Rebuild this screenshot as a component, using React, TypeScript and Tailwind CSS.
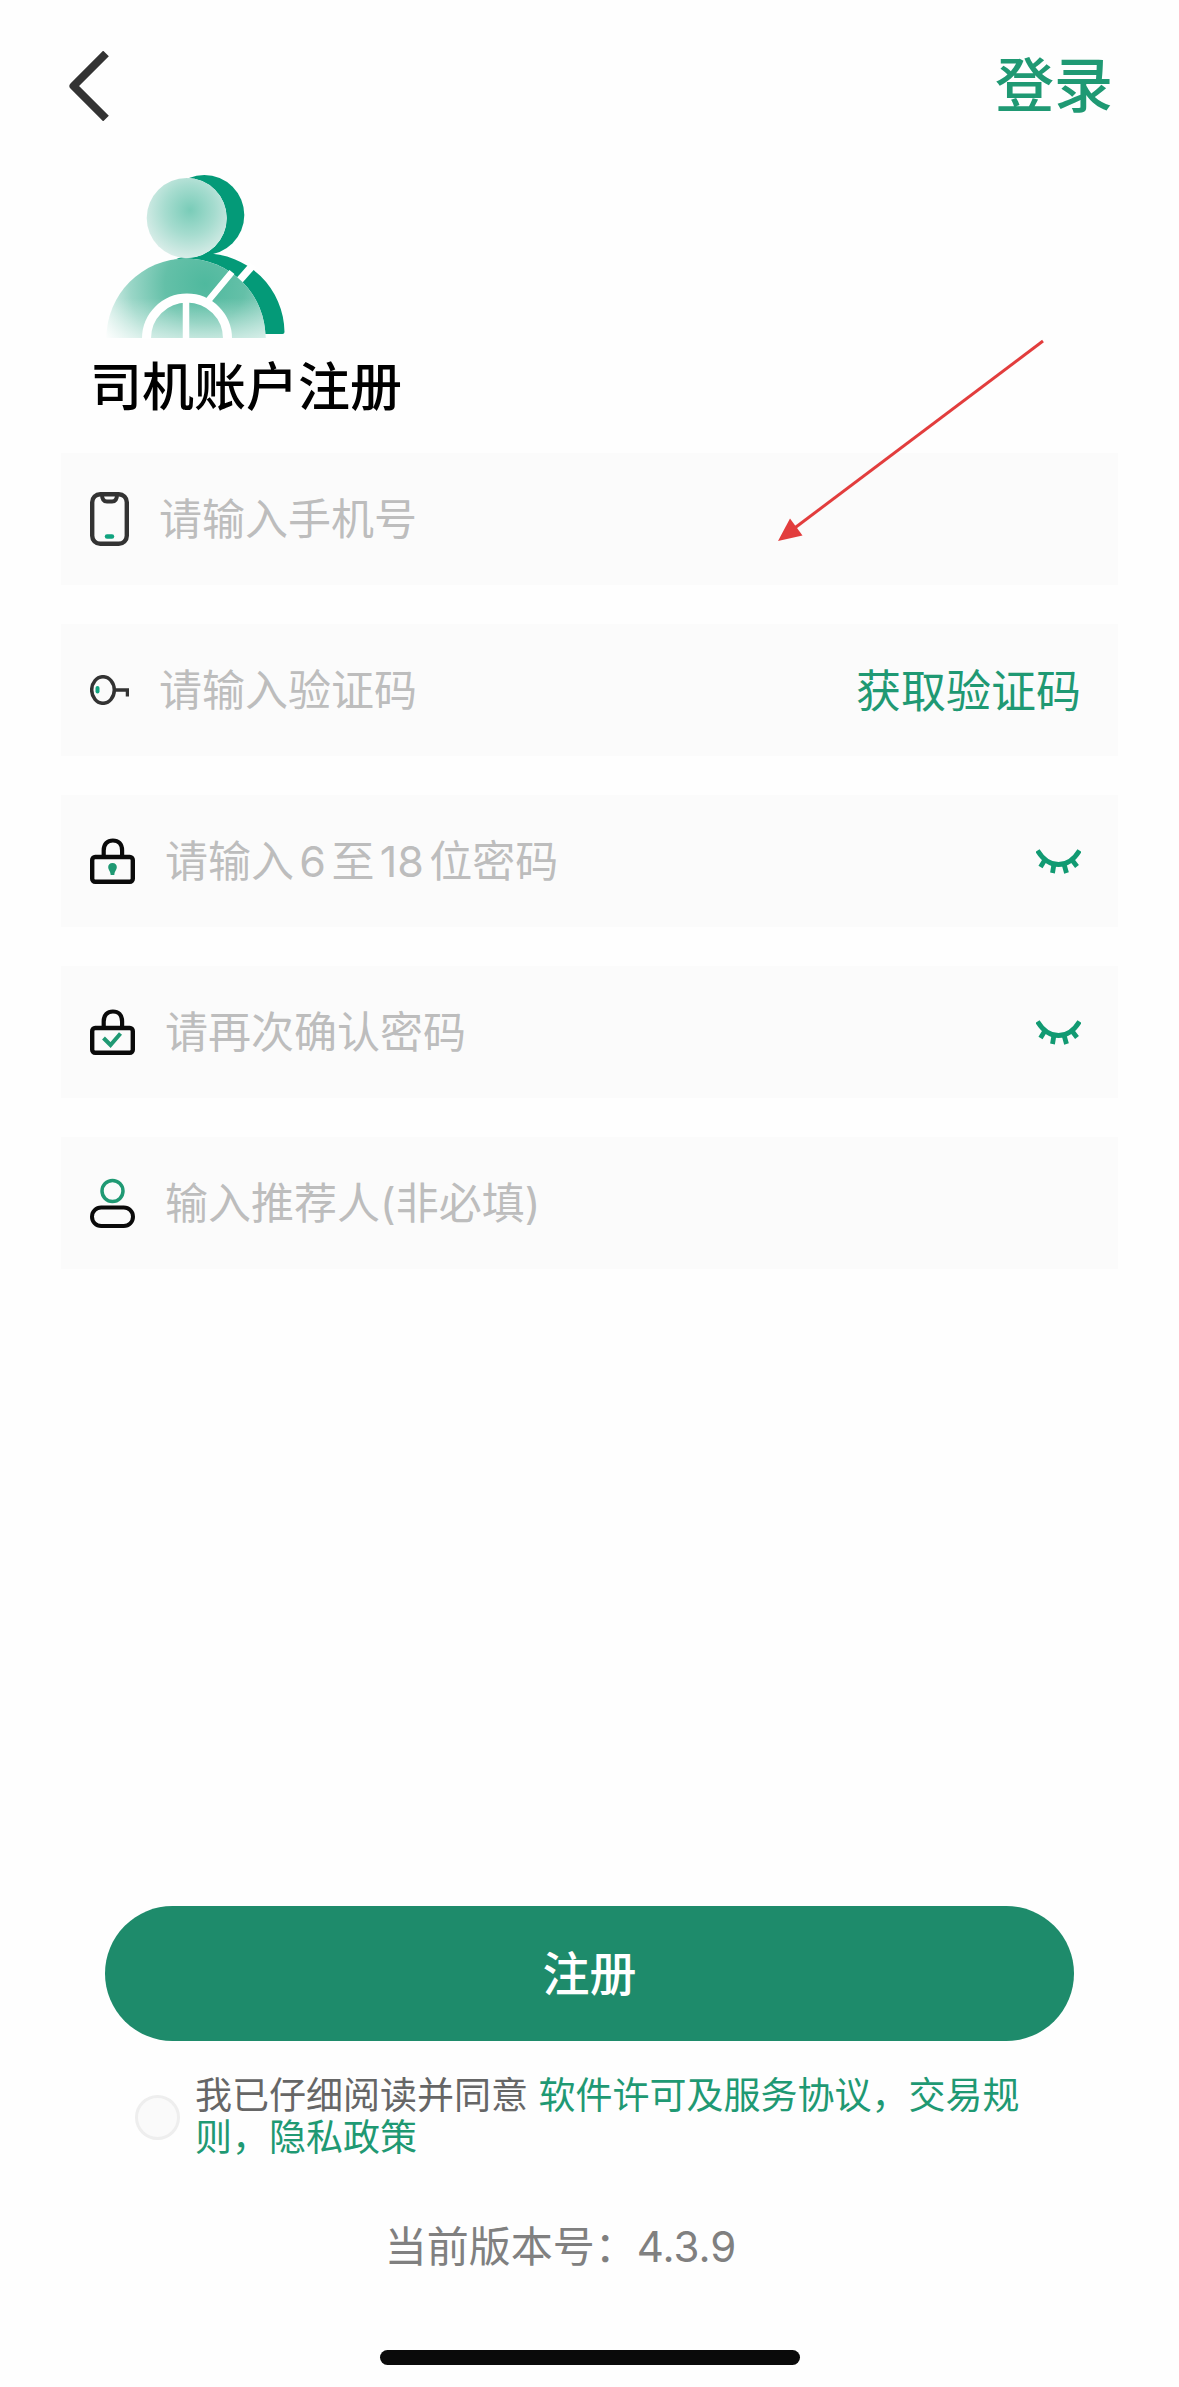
import { useState, type ReactNode } from 'react'

const GREEN = '#1f9973'

function PhoneIcon() {
  return (
    <svg width="39" height="54" viewBox="0 0 39 54" fill="none" aria-hidden="true">
      <rect x="2.200" y="2.200" width="34.600" height="49.600" rx="8" stroke="#333" strokeWidth="4.400" />
      <path d="M12 2.500c0 5 2 7 5 7h5c3 0 5-2 5-7" stroke="#333" strokeWidth="4" />
      <path d="M17 44.500h5" stroke="#10a37f" strokeWidth="4.500" strokeLinecap="round" />
    </svg>
  )
}

function KeyIcon() {
  return (
    <svg width="39" height="30" viewBox="0 0 39 30" fill="none" aria-hidden="true">
      <ellipse cx="13" cy="15" rx="11.300" ry="13.300" stroke="#333" strokeWidth="3.500" />
      <path d="M24.500 15h13v6.500" stroke="#333" strokeWidth="3.500" />
      <path d="M7.500 13v3.500" stroke="#10a37f" strokeWidth="4" strokeLinecap="round" />
    </svg>
  )
}

function LockIcon({ checked = false }: { checked?: boolean }) {
  return (
    <svg width="45" height="46" viewBox="0 0 45 46" fill="none" aria-hidden="true">
      <path d="M13.700 19v-6.500C13.700 6 17.500 2.500 22.900 2.500s9.200 3.500 9.200 10V19" stroke="#0a0a0a" strokeWidth="4.200" />
      <rect x="2.200" y="19" width="40.600" height="24.800" rx="3" stroke="#0a0a0a" strokeWidth="4.400" />
      {checked ? (
        <path d="M13.500 29l7 7 10-11.500" stroke={GREEN} strokeWidth="4" />
      ) : (
        <path d="M22.500 25c2.800 0 4.300 1.800 4.300 4 0 3-2.300 4-2.500 8h-3.600c-.2-4-2.500-5-2.500-8 0-2.200 1.500-4 4.300-4z" fill={GREEN} />
      )}
    </svg>
  )
}

function PersonIcon() {
  return (
    <svg width="45" height="50" viewBox="0 0 45 50" fill="none" aria-hidden="true">
      <circle cx="22.500" cy="13" r="10.500" stroke={GREEN} strokeWidth="3.500" />
      <rect x="2" y="29.500" width="41" height="18.500" rx="9.200" stroke="#0a0a0a" strokeWidth="4" />
    </svg>
  )
}

function ClosedEyeIcon() {
  return (
    <svg width="45" height="25" viewBox="0 0 45 25" fill="none" stroke="#119a72" strokeWidth="4.800" aria-hidden="true">
      <path d="M1.500 1.500C7 10.500 14 15.500 22.500 15.500S38 10.500 43.500 1.500" />
      <path d="M8.500 11.500l-4 6.500M18 15l-1.500 9M28 15l2.500 9M36 11l5 6.500" />
    </svg>
  )
}

function DriverAvatar() {
  return (
    <svg className="block" width="195" height="170" viewBox="90 171 195 170" aria-hidden="true">
      <defs>
        <radialGradient id="head" gradientUnits="userSpaceOnUse" cx="190" cy="210" r="50">
          <stop offset="0" stopColor="#79ccb8" />
          <stop offset="0.500" stopColor="#a6dccf" />
          <stop offset="1" stopColor="#dceeea" />
        </radialGradient>
        <radialGradient id="body" gradientUnits="userSpaceOnUse" cx="205" cy="284" r="115">
          <stop offset="0" stopColor="#4fb99e" />
          <stop offset="0.350" stopColor="#64c0a8" />
          <stop offset="0.650" stopColor="#9ad6c7" />
          <stop offset="1" stopColor="#fff" />
        </radialGradient>
        <linearGradient id="fade" x1="0" y1="0" x2="0" y2="1">
          <stop offset="0.500" stopColor="#fff" stopOpacity="0" />
          <stop offset="1" stopColor="#fff" stopOpacity="0.550" />
        </linearGradient>
      </defs>
      <circle cx="204.300" cy="215" r="40" fill="#049a78" />
      <path d="M125.500 334a79.500 79.500 0 0 1 159-2q0 2-2 2z" fill="#049a78" />
      <path d="M238 282l15-17" stroke="#fff" strokeWidth="7.500" />
      <circle cx="186.700" cy="218" r="40" fill="#fff" />
      <circle cx="186.700" cy="218" r="40" fill="url(#head)" />
      <path d="M106.500 338a79.500 79.500 0 0 1 159 0z" fill="#fff" />
      <path d="M106.500 338a79.500 79.500 0 0 1 159 0z" fill="url(#body)" />
      <path d="M106.500 338a79.500 79.500 0 0 1 159 0z" fill="url(#fade)" />
      <path d="M146.500 338.500a40.500 40.500 0 0 1 81 0" fill="none" stroke="#fff" strokeWidth="9" />
      <path d="M186 300v39M208 301l24-29" stroke="#fff" strokeWidth="6.500" />
    </svg>
  )
}

function PointerArrow() {
  return (
    <svg
      className="pointer-events-none absolute right-[73px] -top-[114px]"
      width="269"
      height="204"
      viewBox="0 0 269 204"
      aria-hidden="true"
    >
      <path d="M267 2L16 191" stroke="#e23d3d" strokeWidth="3" />
      <path d="M2 202l12-22.500 12.500 17z" fill="#e23d3d" />
    </svg>
  )
}

interface FieldProps {
  id: string
  label: string
  placeholder: string
  icon: ReactNode
  type?: string
  children?: ReactNode
}

function Field({ id, label, placeholder, icon, type = 'text', children }: FieldProps) {
  return (
    <div className="relative flex h-[132px] items-center gap-[30px] bg-[#fbfbfb] pl-[29px] pr-[37px]">
      <label htmlFor={id} aria-label={label} className="shrink-0">
        {icon}
      </label>
      <input
        id={id}
        type={type}
        placeholder={placeholder}
        className="h-[60px] min-w-0 flex-1 bg-transparent text-[43px] leading-[60px] text-[#333] outline-none [text-autospace:normal] placeholder:text-[#bdbdbd]"
      />
      {children}
    </div>
  )
}

function PasswordField(props: FieldProps) {
  const [visible, setVisible] = useState(false)

  return (
    <Field {...props} type={visible ? 'text' : 'password'}>
      <button type="button" aria-label="显示密码" onClick={() => setVisible(!visible)}>
        <ClosedEyeIcon />
      </button>
    </Field>
  )
}

export default function App() {
  const [agreed, setAgreed] = useState(false)

  return (
    <div className="flex min-h-screen flex-col bg-[#fefefe] font-[Inter,'Noto_Sans_CJK_SC',sans-serif]">
      <header className="flex h-[171px] items-center justify-between px-[66px]">
        <button type="button" aria-label="返回">
          <svg width="44" height="70" viewBox="0 0 44 70" fill="none" aria-hidden="true">
            <path d="M40 2.500L7.500 35 40 67.500" stroke="#333" strokeWidth="8" strokeLinejoin="round" />
          </svg>
        </button>
        <a href="#login" className="text-[59px] font-medium leading-[72px] text-[#1f9973]">登录</a>
      </header>

      <main className="flex flex-1 flex-col">
        <div className="px-[90px]">
          <DriverAvatar />
          <h1 className="mt-4 text-[52px] font-medium leading-[62px] text-black">司机账户注册</h1>
        </div>

        <form className="flex flex-1 flex-col" onSubmit={(e) => e.preventDefault()}>
          <div className="mx-[61px] mt-[34px] flex flex-col gap-[39px]">
            <div className="relative">
              <Field id="phone" label="手机号" placeholder="请输入手机号" icon={<PhoneIcon />} />
              <PointerArrow />
            </div>
            <Field id="code" label="验证码" placeholder="请输入验证码" icon={<KeyIcon />}>
              <button type="button" className="pt-1 text-[45px] leading-[60px] text-[#1f9973]">获取验证码</button>
            </Field>
            <PasswordField id="password" label="密码" placeholder="请输入6至18位密码" icon={<LockIcon />} />
            <PasswordField id="confirm" label="确认密码" placeholder="请再次确认密码" icon={<LockIcon checked />} />
            <Field id="referrer" label="推荐人" placeholder="输入推荐人(非必填)" icon={<PersonIcon />} />
          </div>

          <div className="mt-auto px-[105px]">
            <button
              type="submit"
              className="h-[135px] w-full rounded-full bg-[#1e8b6b] text-[47px] font-medium leading-[60px] text-white"
            >
              注册
            </button>
            <div className="mt-[34px] flex items-center gap-[15px] px-[30px]">
              <input
                id="agree"
                type="checkbox"
                checked={agreed}
                onChange={(e) => setAgreed(e.target.checked)}
                className="size-[45px] shrink-0 appearance-none rounded-full border-3 border-[#eeeeee] bg-[#fafafa] checked:bg-[#1e8b6b]"
              />
              <p className="flex-1 text-[37px] leading-[42px] text-[#666]">
                <label htmlFor="agree">我已仔细阅读并同意</label>{' '}
                <span className="text-[#1f9973]">
                  <a href="#license">软件许可及服务协议</a>，<a href="#trade">交易规则</a>，<a href="#privacy">隐私政策</a>
                </span>
              </p>
            </div>
          </div>
        </form>
      </main>

      <footer className="flex flex-col items-center">
        <p className="mt-[58px] pr-[58px] text-[42px] leading-[60px] text-[#808080]">当前版本号：4.3.9</p>
        <div className="mt-[73px] mb-[22px] h-[15px] w-[420px] rounded-full bg-[#0a0a0a]" />
      </footer>
    </div>
  )
}
